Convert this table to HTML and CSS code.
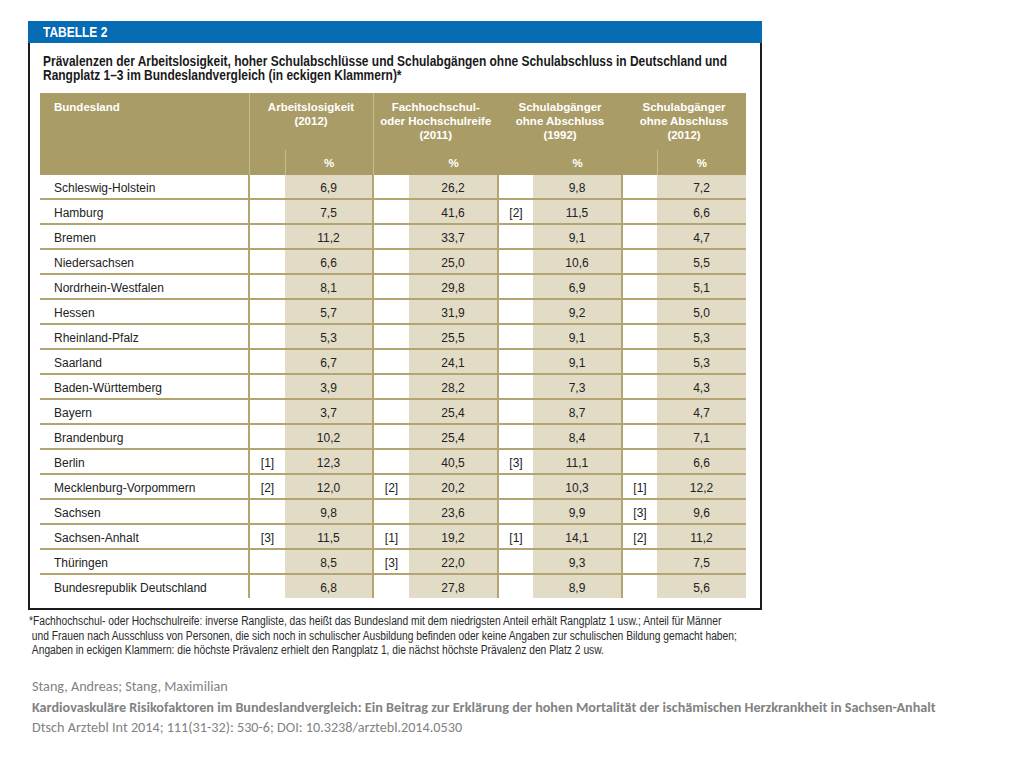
FILE: index.html
```html
<!DOCTYPE html>
<html lang="de">
<head>
<meta charset="utf-8">
<title>Tabelle 2</title>
<link rel="stylesheet" href="styles.css">
</head>
<body>
<div class="figure">
  <div class="bar"><span class="sq">TABELLE 2</span></div>
  <div class="box">
    <h1 class="title"><span class="sq">Prävalenzen der Arbeitslosigkeit, hoher Schulabschlüsse und Schulabgängen ohne Schulabschluss in Deutschland und<br>Rangplatz 1–3 im Bundeslandvergleich (in eckigen Klammern)*</span></h1>
    <table class="data">
      <colgroup>
        <col class="c-name"><col class="c-rk1"><col class="c-v1"><col class="c-rk"><col class="c-v"><col class="c-rk3"><col class="c-v"><col class="c-rk3"><col class="c-v">
      </colgroup>
      <thead>
        <tr class="h1">
          <th class="hname" rowspan="2">Bundesland</th>
          <th colspan="2" class="sep">Arbeitslosigkeit<br>(2012)</th>
          <th colspan="2">Fachhochschul-<br>oder Hochschulreife<br>(2011)</th>
          <th colspan="2">Schulabgänger<br>ohne Abschluss<br>(1992)</th>
          <th colspan="2">Schulabgänger<br>ohne Abschluss<br>(2012)</th>
        </tr>
        <tr class="h2">
          <th class="thin"></th><th class="sep">%</th>
          <th></th><th>%</th>
          <th></th><th>%</th>
          <th class="thin"></th><th>%</th>
        </tr>
      </thead>
      <tbody>
        <tr><td class="name">Schleswig-Holstein</td><td class="rk"></td><td class="v">6,9</td><td class="rk"></td><td class="v">26,2</td><td class="rk"></td><td class="v">9,8</td><td class="rk"></td><td class="v last">7,2</td></tr>
        <tr><td class="name">Hamburg</td><td class="rk"></td><td class="v">7,5</td><td class="rk"></td><td class="v">41,6</td><td class="rk">[2]</td><td class="v">11,5</td><td class="rk"></td><td class="v last">6,6</td></tr>
        <tr><td class="name">Bremen</td><td class="rk"></td><td class="v">11,2</td><td class="rk"></td><td class="v">33,7</td><td class="rk"></td><td class="v">9,1</td><td class="rk"></td><td class="v last">4,7</td></tr>
        <tr><td class="name">Niedersachsen</td><td class="rk"></td><td class="v">6,6</td><td class="rk"></td><td class="v">25,0</td><td class="rk"></td><td class="v">10,6</td><td class="rk"></td><td class="v last">5,5</td></tr>
        <tr><td class="name">Nordrhein-Westfalen</td><td class="rk"></td><td class="v">8,1</td><td class="rk"></td><td class="v">29,8</td><td class="rk"></td><td class="v">6,9</td><td class="rk"></td><td class="v last">5,1</td></tr>
        <tr><td class="name">Hessen</td><td class="rk"></td><td class="v">5,7</td><td class="rk"></td><td class="v">31,9</td><td class="rk"></td><td class="v">9,2</td><td class="rk"></td><td class="v last">5,0</td></tr>
        <tr><td class="name">Rheinland-Pfalz</td><td class="rk"></td><td class="v">5,3</td><td class="rk"></td><td class="v">25,5</td><td class="rk"></td><td class="v">9,1</td><td class="rk"></td><td class="v last">5,3</td></tr>
        <tr><td class="name">Saarland</td><td class="rk"></td><td class="v">6,7</td><td class="rk"></td><td class="v">24,1</td><td class="rk"></td><td class="v">9,1</td><td class="rk"></td><td class="v last">5,3</td></tr>
        <tr><td class="name">Baden-Württemberg</td><td class="rk"></td><td class="v">3,9</td><td class="rk"></td><td class="v">28,2</td><td class="rk"></td><td class="v">7,3</td><td class="rk"></td><td class="v last">4,3</td></tr>
        <tr><td class="name">Bayern</td><td class="rk"></td><td class="v">3,7</td><td class="rk"></td><td class="v">25,4</td><td class="rk"></td><td class="v">8,7</td><td class="rk"></td><td class="v last">4,7</td></tr>
        <tr><td class="name">Brandenburg</td><td class="rk"></td><td class="v">10,2</td><td class="rk"></td><td class="v">25,4</td><td class="rk"></td><td class="v">8,4</td><td class="rk"></td><td class="v last">7,1</td></tr>
        <tr><td class="name">Berlin</td><td class="rk">[1]</td><td class="v">12,3</td><td class="rk"></td><td class="v">40,5</td><td class="rk">[3]</td><td class="v">11,1</td><td class="rk"></td><td class="v last">6,6</td></tr>
        <tr><td class="name">Mecklenburg-Vorpommern</td><td class="rk">[2]</td><td class="v">12,0</td><td class="rk">[2]</td><td class="v">20,2</td><td class="rk"></td><td class="v">10,3</td><td class="rk">[1]</td><td class="v last">12,2</td></tr>
        <tr><td class="name">Sachsen</td><td class="rk"></td><td class="v">9,8</td><td class="rk"></td><td class="v">23,6</td><td class="rk"></td><td class="v">9,9</td><td class="rk">[3]</td><td class="v last">9,6</td></tr>
        <tr><td class="name">Sachsen-Anhalt</td><td class="rk">[3]</td><td class="v">11,5</td><td class="rk">[1]</td><td class="v">19,2</td><td class="rk">[1]</td><td class="v">14,1</td><td class="rk">[2]</td><td class="v last">11,2</td></tr>
        <tr><td class="name">Thüringen</td><td class="rk"></td><td class="v">8,5</td><td class="rk">[3]</td><td class="v">22,0</td><td class="rk"></td><td class="v">9,3</td><td class="rk"></td><td class="v last">7,5</td></tr>
        <tr><td class="name">Bundesrepublik Deutschland</td><td class="rk"></td><td class="v">6,8</td><td class="rk"></td><td class="v">27,8</td><td class="rk"></td><td class="v">8,9</td><td class="rk"></td><td class="v last">5,6</td></tr>
      </tbody>
    </table>
  </div>
  <p class="note"><span class="sq">*Fachhochschul- oder Hochschulreife: inverse Rangliste, das heißt das Bundesland mit dem niedrigsten Anteil erhält Rangplatz 1 usw.; Anteil für Männer<br>&nbsp;und Frauen nach Ausschluss von Personen, die sich noch in schulischer Ausbildung befinden oder keine Angaben zur schulischen Bildung gemacht haben;<br>&nbsp;Angaben in eckigen Klammern: die höchste Prävalenz erhielt den Rangplatz 1, die nächst höchste Prävalenz den Platz 2 usw.</span></p>
</div>
<div class="cite">
  <p>Stang, Andreas; Stang, Maximilian</p>
  <p class="ctitle">Kardiovaskuläre Risikofaktoren im Bundeslandvergleich: Ein Beitrag zur Erklärung der hohen Mortalität der ischämischen Herzkrankheit in Sachsen-Anhalt</p>
  <p>Dtsch Arztebl Int 2014; 111(31-32): 530-6; DOI: 10.3238/arztebl.2014.0530</p>
</div>
</body>
</html>
```

FILE: styles.css
```css
html, body {
  margin: 0;
  padding: 0;
  background: #ffffff;
}

body {
  font-family: "Liberation Sans", Arial, sans-serif;
  color: #222;
}

.sq {
  display: inline-block;
  white-space: nowrap;
  transform: scaleX(0.855);
  transform-origin: 0 0;
}

.figure {
  margin: 21px 0 0 28px;
  width: 734px;
}

.bar {
  height: 22px;
  background: #056bb3;
  color: #fff;
  font-weight: bold;
  font-size: 14px;
  line-height: 23px;
  padding-left: 15px;
}

.box {
  border: 2px solid #1c1c1c;
  border-top: 0;
  padding: 11px 14px 10px 10px;
}

.title {
  margin: 0 0 11px 3px;
  font-weight: bold;
  font-size: 14px;
  line-height: 14px;
  color: #1a1a1a;
  height: 28px;
}

.data {
  border-collapse: collapse;
  table-layout: fixed;
  width: 706px;
  font-size: 12px;
}

.c-name { width: 209px; }
.c-rk1 { width: 36px; }
.c-v1 { width: 88px; }
.c-rk { width: 36px; }
.c-rk3 { width: 35px; }
.c-v { width: 89px; }

.data th {
  background: #aa9c66;
  color: #fff;
  font-weight: bold;
  font-size: 11.5px;
  padding: 0;
}

.h1 th {
  height: 50px;
  vertical-align: top;
  line-height: 14px;
  padding-top: 7px;
  text-align: center;
}

.h1 th.hname {
  text-align: left;
  padding-left: 14px;
  border-right: 1px solid #c6bb92;
}

.h1 th.sep {
  border-right: 1px solid #c6bb92;
}

.h2 th {
  height: 25px;
  text-align: center;
  vertical-align: middle;
}

.h2 th.thin {
  border-right: 1px solid #c6bb92;
}

.h2 th.sep {
  border-right: 1px solid #c6bb92;
}

.data td {
  height: 21px;
  padding: 2px 0 0;
  border-bottom: 2px solid #b2a571;
  text-align: center;
  vertical-align: middle;
  color: #222;
}

.data tbody tr:last-child td {
  border-bottom: 0;
}

.data td.name {
  text-align: left;
  padding-left: 14px;
  border-right: 2px solid #b2a571;
}

.data td.v {
  background: #e2dbc5;
  border-right: 2px solid #b2a571;
}

.data td.v.last {
  border-right: 0;
}

.note {
  margin: 4px 0 0 1px;
  font-size: 12px;
  line-height: 14.5px;
  color: #2a2a2a;
  height: 44px;
}

.cite {
  margin: 18px 0 0 32px;
  font-family: Carlito, Calibri, "Open Sans", sans-serif;
  font-size: 14.2px;
  line-height: 20.5px;
  color: #828282;
}

.cite p {
  margin: 0;
  white-space: nowrap;
}

.cite .ctitle {
  font-weight: bold;
}
```
